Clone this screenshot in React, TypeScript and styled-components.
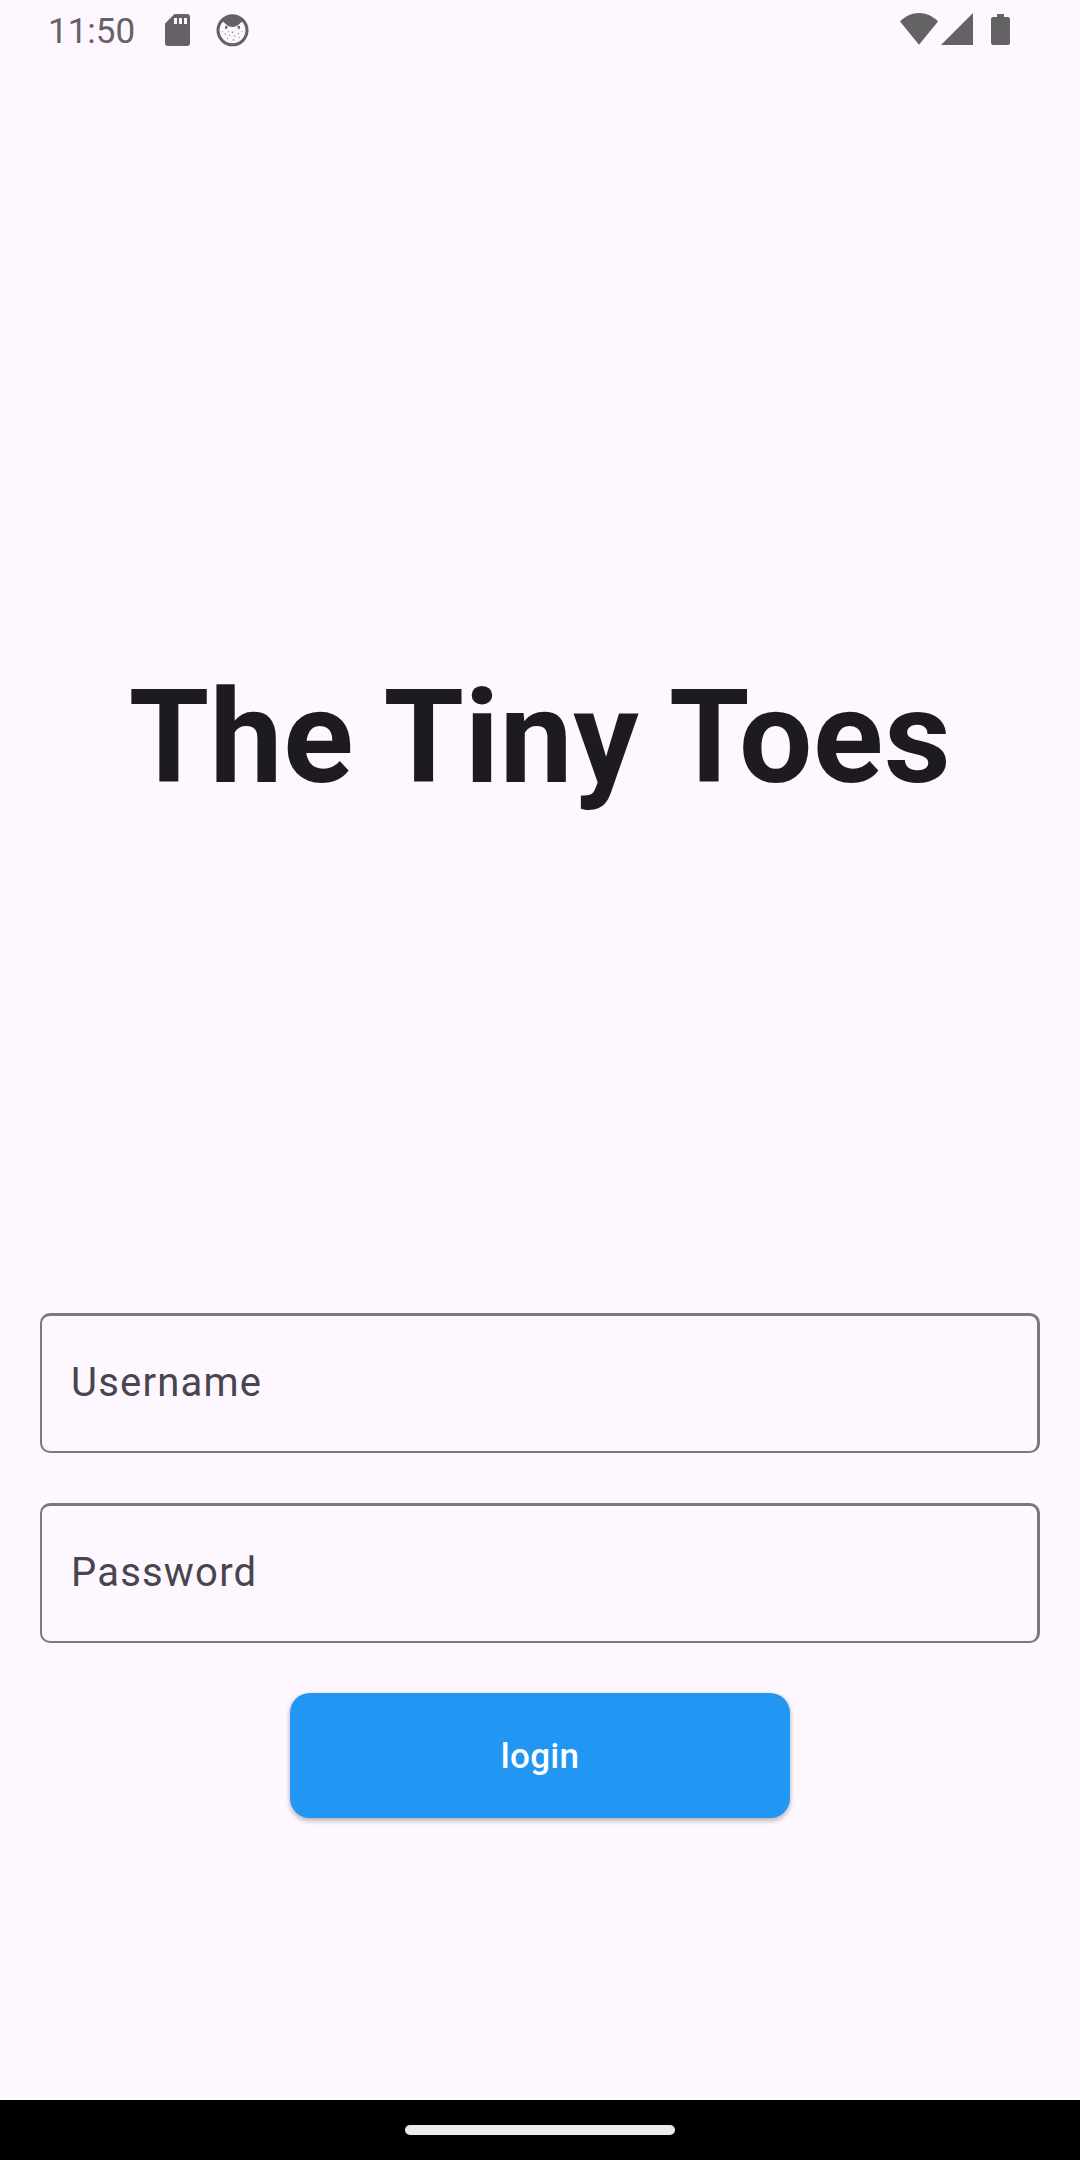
import React from "react";
import styled, { createGlobalStyle } from "styled-components";

const GlobalStyle = createGlobalStyle`
  *, *::before, *::after { box-sizing: border-box; }
  html, body { margin: 0; padding: 0; background: #fef7ff; }
`;

const Screen = styled.div`
  width: 1080px;
  height: 2160px;
  display: flex;
  flex-direction: column;
  overflow: hidden;
  background: #fef7ff;
  font-family: Roboto, "Noto Sans", sans-serif;
`;

const StatusBar = styled.header`
  height: 60px;
  display: flex;
  justify-content: space-between;
  padding: 0 70px 0 48px;
  color: #656266;
`;

const StatusGroup = styled.div`
  display: flex;
  align-items: flex-start;
`;

const Clock = styled.span`
  width: 117px;
  padding-top: 11px;
  font-size: 35px;
  line-height: 41px;
  white-space: nowrap;
`;

const Glyph = styled.svg<{ $top: number; $gap: number }>`
  display: block;
  flex: none;
  margin-top: ${(p) => p.$top}px;
  margin-left: ${(p) => p.$gap}px;
`;

const Content = styled.main`
  flex: 1;
  display: flex;
  flex-direction: column;
  align-items: center;
  padding: 0 40px;
`;

const Title = styled.h1`
  margin: 602px 0 0;
  font-size: 130px;
  line-height: 152px;
  font-weight: 700;
  letter-spacing: 0.625px;
  white-space: nowrap;
  color: #1d1b20;
`;

const Form = styled.form`
  width: 100%;
  margin-top: 499px;
  display: flex;
  flex-direction: column;
  align-items: center;
  gap: 50px;
`;

const Field = styled.label`
  width: 100%;
  height: 140px;
  display: flex;
  align-items: center;
  padding: 0 28px 1px 29px;
  border: solid #7d777f;
  border-width: 3px 3px 2px 2px;
  border-radius: 10px;
  font-size: 40px;
  line-height: 60px;
  letter-spacing: 1.2px;
  color: #49454f;
`;

const LoginButton = styled.button`
  width: 500px;
  height: 125px;
  padding: 2px 0 0;
  border: 0;
  border-radius: 20px;
  background: #2196f3;
  box-shadow: 0 3px 5px rgba(0, 0, 0, 0.22), 0 1px 5px rgba(0, 0, 0, 0.12);
  color: #fff;
  font-family: inherit;
  font-size: 35px;
  font-weight: 500;
  line-height: 50px;
  letter-spacing: 0.25px;
`;

const NavigationBar = styled.footer`
  height: 60px;
  display: flex;
  align-items: center;
  justify-content: center;
  background: #000;
`;

const HomeHandle = styled.div`
  width: 270px;
  height: 10px;
  border-radius: 5px;
  background: #ebebeb;
`;

const SdCardIcon = () => (
  <Glyph $top={14} $gap={0} width="25" height="32" viewBox="0 0 25 32" fill="currentColor">
    <path
      fillRule="evenodd"
      d="M9.5 0H22a3 3 0 0 1 3 3v26a3 3 0 0 1-3 3H3a3 3 0 0 1-3-3V9.5zM9 4v6h3V4zm5 0v6h3V4zm5 0v6h3V4z"
    />
  </Glyph>
);

const CatIcon = () => (
  <Glyph $top={14} $gap={26} width="33" height="33" viewBox="0 0 33 33" fill="currentColor">
    <circle cx="16.5" cy="16.3" r="14.5" fill="none" stroke="currentColor" strokeWidth="3.1" />
    <path d="M6 7C11-1 22-1 27 7L25.5 8 22.5 10.8Q19.5 13 16.5 13T10.5 10.8L7.5 8Z" />
    <path d="M9 12.3l2.6-.7-.4 3-1.8.6zM24 12.3l-2.6-.7.4 3 1.8.6z" />
    <path d="M15.2 17.8h2.6l-1.3 1.2z" />
    <g opacity=".6">
      <circle cx="6.5" cy="17.5" r=".6" />
      <circle cx="9.5" cy="20" r=".8" />
      <circle cx="12.5" cy="17.5" r=".6" />
      <circle cx="22.5" cy="19.5" r=".8" />
      <circle cx="26" cy="17.5" r=".6" />
      <circle cx="13.5" cy="21.5" r=".7" />
      <circle cx="18.5" cy="22" r=".8" />
      <circle cx="11.5" cy="24.5" r=".7" />
      <circle cx="17.5" cy="26" r=".9" />
      <circle cx="23" cy="23.5" r=".7" />
    </g>
  </Glyph>
);

const WifiIcon = () => (
  <Glyph $top={13} $gap={0} width="38" height="32" viewBox="0 0 38 32" fill="currentColor">
    <path d="M0 8.6C5 3 12 0 19 0S33 3 38 8.6L19 31.7z" />
  </Glyph>
);

const SignalIcon = () => (
  <Glyph $top={13} $gap={3} width="32" height="32" viewBox="0 0 32 32" fill="currentColor">
    <path d="M0 32L32 0v32z" />
  </Glyph>
);

const BatteryIcon = () => (
  <Glyph $top={14} $gap={18} width="19" height="31" viewBox="0 0 19 31" fill="currentColor">
    <path d="M6 0h7v3h4a2 2 0 0 1 2 2v24a2 2 0 0 1-2 2H2a2 2 0 0 1-2-2V5a2 2 0 0 1 2-2h4z" />
  </Glyph>
);

export default function App() {
  return (
    <>
      <GlobalStyle />
      <Screen>
        <StatusBar>
          <StatusGroup>
            <Clock>11:50</Clock>
            <SdCardIcon />
            <CatIcon />
          </StatusGroup>
          <StatusGroup>
            <WifiIcon />
            <SignalIcon />
            <BatteryIcon />
          </StatusGroup>
        </StatusBar>
        <Content>
          <Title>The Tiny Toes</Title>
          <Form>
            <Field>Username</Field>
            <Field>Password</Field>
            <LoginButton type="button">login</LoginButton>
          </Form>
        </Content>
        <NavigationBar>
          <HomeHandle />
        </NavigationBar>
      </Screen>
    </>
  );
}
